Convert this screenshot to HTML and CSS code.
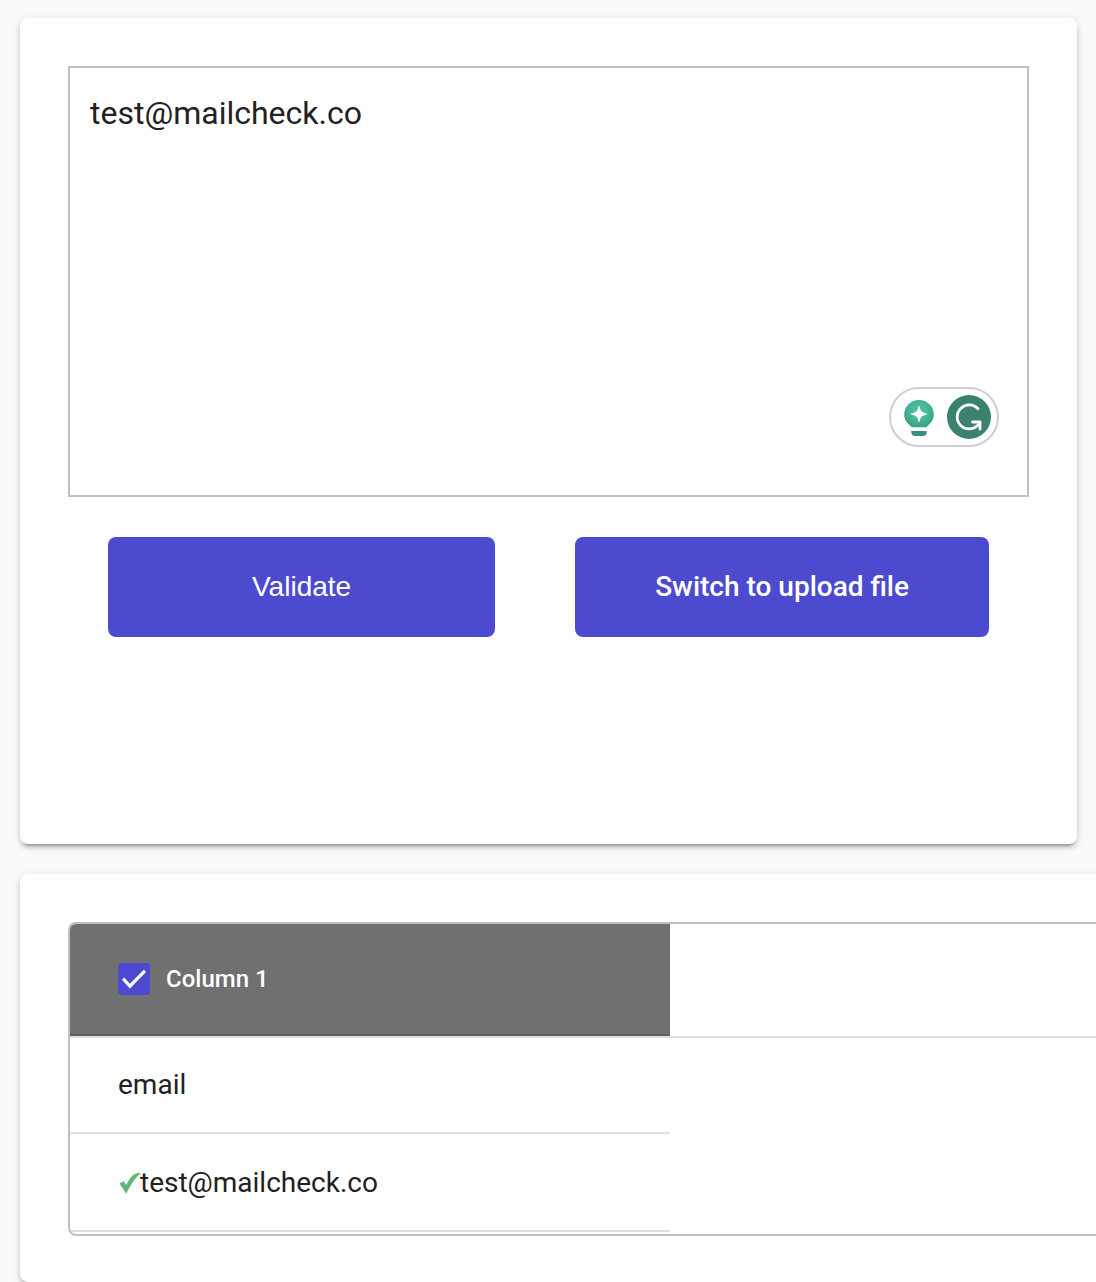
FILE: index.html
```html
<!DOCTYPE html>
<html lang="en">
<head>
<meta charset="utf-8">
<meta name="viewport" content="width=device-width, initial-scale=1">
<title>Email validation</title>
<link rel="stylesheet" href="styles.css">
</head>
<body>
<main class="page">
  <form class="card card-input">
    <div class="editor">
      <textarea class="emails" aria-label="Emails" spellcheck="false">test@mailcheck.co</textarea>
      <div class="assistant">
        <svg class="bulb" viewBox="0 0 32 38" aria-hidden="true">
          <defs>
            <radialGradient id="bulb-fill" cx="50%" cy="40%" r="60%">
              <stop offset="0" stop-color="#4fc3a1"/>
              <stop offset="0.5" stop-color="#46b89a"/>
              <stop offset="1" stop-color="#3ba286"/>
            </radialGradient>
          </defs>
          <path fill="url(#bulb-fill)" d="M16 2a14.800 14.800 0 0 1 14.800 14.800c0 5-2.600 7.600-5.300 10.100-.9.800-1.500 1.500-2 2.300h-15c-.5-.8-1.100-1.500-2-2.300C3.800 24.400 1.200 21.800 1.200 16.800A14.800 14.800 0 0 1 16 2z"/>
          <path fill="#fff" stroke="#fff" stroke-width="1" stroke-linejoin="round" d="M16 8.500c1 4.600 2.600 6.100 7.600 7.500-5 1.400-6.600 2.900-7.600 7.500-1-4.600-2.600-6.100-7.600-7.500 5-1.400 6.600-2.900 7.600-7.500z"/>
          <path fill="#37917a" d="M8.300 33h15.400v1a4 4 0 0 1-4 4h-7.400a4 4 0 0 1-4-4z"/>
        </svg>
        <svg class="grammar" viewBox="0 0 44 44" aria-hidden="true">
          <circle cx="22" cy="22" r="22" fill="#3a8172"/>
          <path fill="none" stroke="#fff" stroke-width="2.800" stroke-linecap="round" d="M31 13.800A12 12 0 1 0 30.500 30.600L33 27.800"/>
          <path fill="none" stroke="#fff" stroke-width="2.800" stroke-linecap="round" stroke-linejoin="round" d="M25.500 27h7.500v7.200"/>
        </svg>
      </div>
    </div>
    <div class="actions">
      <button type="button" class="btn btn-validate">Validate</button>
      <button type="button" class="btn btn-switch">Switch to upload file</button>
    </div>
  </form>

  <section class="card card-result">
    <div class="table-frame">
      <table class="result">
        <thead>
          <tr>
            <th scope="col" class="col-main">
              <label class="pick">
                <input type="checkbox" class="tick" checked>
                <span>Column 1</span>
              </label>
            </th>
            <td class="rest"></td>
          </tr>
        </thead>
        <tbody>
          <tr><td>email</td></tr>
          <tr>
            <td>
              <span class="valid">
                <svg class="mark" viewBox="0 0 22 22" aria-hidden="true"><path fill="#5fb878" d="M1.500 11.500 5.800 9 8.200 13C11.500 6.500 15.500-.3 23 1.200 17.800 4.500 12.500 13 8.200 21.800z"/></svg>
                <span>test@mailcheck.co</span>
              </span>
            </td>
          </tr>
        </tbody>
      </table>
    </div>
  </section>
</main>
</body>
</html>
```
FILE: styles.css
```css
*,
*::before,
*::after {
  box-sizing: border-box;
}

body {
  margin: 0;
  background: #fafafa;
  color: #212121;
  font-family: Roboto, "Liberation Sans", sans-serif;
  font-size: 28px;
  line-height: 40px;
}

.page {
  display: flex;
  flex-direction: column;
  gap: 30px;
  padding: 18px 0 0 20px;
  overflow: hidden;
}

.card {
  padding: 48px;
  border-radius: 8px;
  background: #fff;
  box-shadow:
    0 6px 2px -4px rgba(0, 0, 0, 0.2),
    0 4px 4px 0 rgba(0, 0, 0, 0.14),
    0 2px 10px 0 rgba(0, 0, 0, 0.12);
}

.card-input {
  min-height: 826px;
  margin-right: 19px;
}

.card-result {
  margin-right: -40px;
  padding-bottom: 46px;
}

.editor {
  position: relative;
}

.emails {
  display: block;
  width: 100%;
  height: 431px;
  padding: 24px 20px;
  border: 2px solid #c0c0c0;
  background: transparent;
  color: inherit;
  font: 32px/42px Roboto, "Liberation Sans", sans-serif;
  resize: none;
  outline: none;
}

.assistant {
  position: absolute;
  right: 30px;
  bottom: 50px;
  display: flex;
  align-items: center;
  gap: 12px;
  height: 60px;
  padding: 0 6px 0 12px;
  border: 2px solid #cdcddd;
  border-radius: 30px;
  background: #fff;
}

.bulb {
  width: 32px;
  height: 38px;
}

.grammar {
  width: 44px;
  height: 44px;
}

.actions {
  display: flex;
  gap: 80px;
  padding: 40px;
}

.btn {
  height: 100px;
  padding: 0 80px;
  border: 0;
  border-radius: 8px;
  background: #4c4bcf;
  color: #fff;
  font-size: 28px;
  cursor: pointer;
}

.btn-validate {
  flex: 1;
  font-family: "Liberation Sans", Arial, sans-serif;
}

.btn-switch {
  padding-bottom: 2px;
  font-family: Roboto, "Liberation Sans", sans-serif;
  font-weight: 500;
}

.table-frame {
  margin-right: -60px;
  padding-bottom: 2px;
  border: 2px solid #c0c0c0;
  border-radius: 8px;
  overflow: hidden;
}

.result {
  width: 100%;
  border-spacing: 0;
  table-layout: fixed;
}

.result th,
.result td {
  height: 98px;
  padding: 0 48px;
  border-bottom: 2px solid #dfdfdf;
  text-align: left;
}

.result tbody tr:first-child td {
  height: 96px;
}

.result thead th,
.result thead td {
  height: 114px;
}

.result .col-main {
  width: 600px;
  padding-bottom: 2px;
  background: #707070;
  background-clip: padding-box;
  box-shadow: inset 0 -2px #606060;
  color: #fff;
  font-size: 24px;
  font-weight: 500;
}

.pick {
  display: flex;
  align-items: center;
  gap: 16px;
}

.tick {
  appearance: none;
  display: grid;
  place-items: center;
  width: 32px;
  height: 32px;
  margin: 0;
  border-radius: 4px;
  background: #4c4bcf;
}

.tick:checked::before {
  content: "";
  width: 24px;
  height: 20px;
  background: #fff;
  clip-path: polygon(0 54%, 9% 42%, 33% 74%, 91% 4%, 100% 15%, 33% 97%);
}

.valid {
  display: flex;
  align-items: center;
  padding-top: 2px;
}

.mark {
  width: 22px;
  height: 22px;
}
```
